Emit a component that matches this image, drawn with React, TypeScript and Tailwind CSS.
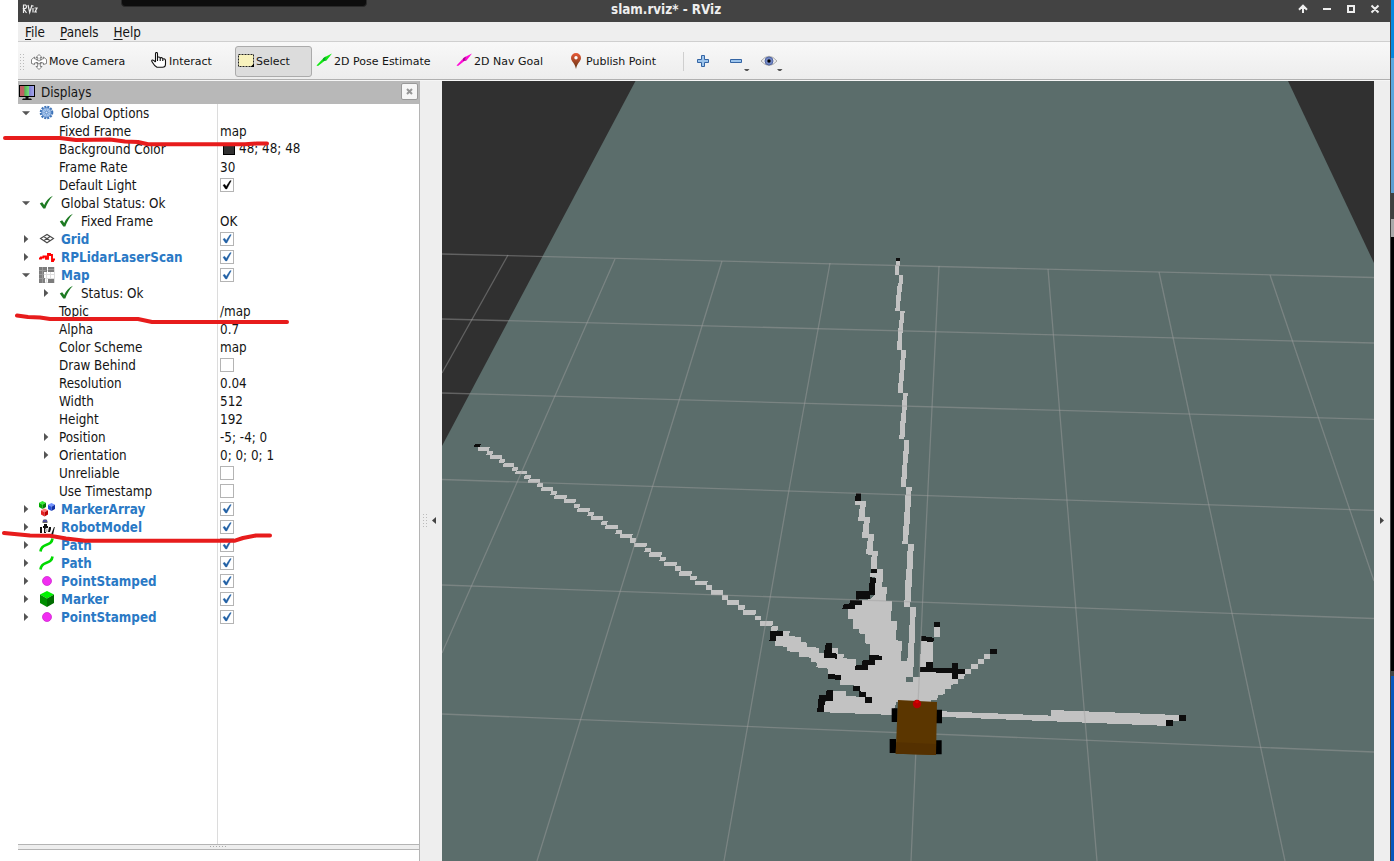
import React from "react";

type IconName =
  | "gear" | "ok" | "grid" | "laser" | "map" | "markers" | "robot" | "path" | "point" | "marker";

type RowData = {
  label: string;
  level?: 0 | 1;
  arrow?: "open" | "closed";
  icon?: IconName;
  bold?: boolean;
  value?: string;
  swatch?: boolean;
  check?: "black" | "blue" | "off";
};

const rows: RowData[] = [
  { label: "Global Options", arrow: "open", icon: "gear" },
  { label: "Fixed Frame", level: 1, value: "map" },
  { label: "Background Color", level: 1, value: "48; 48; 48", swatch: true },
  { label: "Frame Rate", level: 1, value: "30" },
  { label: "Default Light", level: 1, check: "black" },
  { label: "Global Status: Ok", arrow: "open", icon: "ok" },
  { label: "Fixed Frame", level: 1, icon: "ok", value: "OK" },
  { label: "Grid", arrow: "closed", icon: "grid", bold: true, check: "blue" },
  { label: "RPLidarLaserScan", arrow: "closed", icon: "laser", bold: true, check: "blue" },
  { label: "Map", arrow: "open", icon: "map", bold: true, check: "blue" },
  { label: "Status: Ok", level: 1, arrow: "closed", icon: "ok" },
  { label: "Topic", level: 1, value: "/map" },
  { label: "Alpha", level: 1, value: "0.7" },
  { label: "Color Scheme", level: 1, value: "map" },
  { label: "Draw Behind", level: 1, check: "off" },
  { label: "Resolution", level: 1, value: "0.04" },
  { label: "Width", level: 1, value: "512" },
  { label: "Height", level: 1, value: "192" },
  { label: "Position", level: 1, arrow: "closed", value: "-5; -4; 0" },
  { label: "Orientation", level: 1, arrow: "closed", value: "0; 0; 0; 1" },
  { label: "Unreliable", level: 1, check: "off" },
  { label: "Use Timestamp", level: 1, check: "off" },
  { label: "MarkerArray", arrow: "closed", icon: "markers", bold: true, check: "blue" },
  { label: "RobotModel", arrow: "closed", icon: "robot", bold: true, check: "blue" },
  { label: "Path", arrow: "closed", icon: "path", bold: true, check: "blue" },
  { label: "Path", arrow: "closed", icon: "path", bold: true, check: "blue" },
  { label: "PointStamped", arrow: "closed", icon: "point", bold: true, check: "blue" },
  { label: "Marker", arrow: "closed", icon: "marker", bold: true, check: "blue" },
  { label: "PointStamped", arrow: "closed", icon: "point", bold: true, check: "blue" },
];

function Cube({ x, y, s, top, left, right }: { x: number; y: number; s: number; top: string; left: string; right: string }) {
  return (
    <g transform={`translate(${x} ${y}) scale(${s})`}>
      <path d="M0 3.500 7 0l7 3.500-7 4z" fill={top} />
      <path d="M0 3.500 7 7.500V16L0 12z" fill={left} />
      <path d="M14 3.500 7 7.500V16l7-4z" fill={right} />
    </g>
  );
}

function TreeIcon({ name }: { name: IconName }) {
  const art: Record<IconName, React.ReactNode> = {
    gear: (
      <>
        <circle cx="7.5" cy="7.5" r="5.7" fill="none" stroke="#3f74b8" strokeWidth="2.2" strokeDasharray="2 1" />
        <circle cx="7.5" cy="7.5" r="4.8" fill="#a3c3ea" stroke="#4a7dc0" strokeWidth=".9" />
        <path d="M7.5 3v9M3 7.5h9M4.4 4.4l6.2 6.2M10.600 4.400l-6.200 6.200" stroke="#7ba3d9" strokeWidth=".6" />
        <circle cx="7.500" cy="7.500" r="1.300" fill="#dbe8f8" stroke="#4a7dc0" strokeWidth=".7" />
      </>
    ),
    ok: <path d="M.8 8.500 3.200 7.200l2 2.800C7 6 10 2.500 14 .8 10.500 4.500 8 8.700 6.300 13.500H4.300z" fill="#1d7a22" />,
    grid: (
      <g fill="none" stroke="#4a4a4a" strokeWidth="1.100">
        <path d="M1.500 7.500 8 3.500l6.500 4L8 11.800zM4.700 5.500l6.500 4.200M11.200 5.500 4.700 9.700" />
      </g>
    ),
    laser: <path d="M0 9.500h2V8.500h2.500V7.500H7v2.200h2V5h2v1h2v6h1v-1.500h2" fill="none" stroke="#f00" strokeWidth="1.900" />,
    map: (
      <g shapeRendering="crispEdges">
        <path d="M0 3.500h16M0 7.500h16M0 11.500h16M3.500 0v16M7.500 0v16M11.500 0v16M15.500 0v16M0 15.500h16" stroke="#dedede" fill="none" />
        <path fill="#7c7c7c" d="M0 0h8v5H5v6h1v5H0zM9 0h6v5H9zM9 12h6v4H9z" />
        <path d="M0 3.500h7M9 2.500h6M0 7.500h5M0 11.500h5M3.500 0v16" stroke="#999" fill="none" />
      </g>
    ),
    markers: (
      <>
        <Cube x={0} y={0} s={0.5} top="#30ee30" left="#00a800" right="#007d00" />
        <Cube x={9} y={2} s={0.5} top="#7293ff" left="#2450dc" right="#1231a6" />
        <Cube x={2} y={7.5} s={0.5} top="#ff7777" left="#e42222" right="#b00" />
      </>
    ),
    robot: (
      <g>
        <path d="M3.500 2.500a2.500 2.200 0 0 1 5 0V4h-5z" fill="#666" />
        <path d="M4 2h4" stroke="#3434d0" />
        <path d="M5 5h3v2H5zM1 8h2v6H1zM4 7h5v2H7v5H5V9H4zM10 8h2v2l-1 3H9zM3 15h8v1H3zM13 13l2-5h.8L14 16h-2z" fill="#111" />
        <path d="M6 9.500h2.500V13H6z" fill="#bbb" />
      </g>
    ),
    path: <path d="M1.500 14.500c.5-4 2.500-5.500 5.500-6.500s6-2 6.500-6.500" fill="none" stroke="#00d900" strokeWidth="2.600" />,
    point: <circle cx="8" cy="8" r="4.500" fill="#f12df1" stroke="#cf28cf" strokeWidth=".8" />,
    marker: <Cube x={1} y={0} s={1} top="#00f400" left="#008e00" right="#006d00" />,
  };
  return <svg className="h-4 w-4 shrink-0" viewBox="0 0 16 16">{art[name]}</svg>;
}

function Arrow({ kind }: { kind?: "open" | "closed" }) {
  return (
    <svg className="mb-[3px] h-[10px] w-4 shrink-0" viewBox="0 0 16 10">
      {kind === "open" && <path d="M4 3.200h8L8 7.300z" fill="#555" />}
      {kind === "closed" && <path d="M6 1v8l4.300-4z" fill="#555" />}
    </svg>
  );
}

function CheckBox({ kind }: { kind: "black" | "blue" | "off" }) {
  return (
    <span className="flex h-[14px] w-[14px] items-center justify-center border border-[#b4b4b4] bg-white">
      {kind !== "off" && (
        <svg className="h-3 w-3" viewBox="0 0 12 12">
          <path d="M2 6.200l1.700-.9 1.500 2.200L9 1.700h1.200L5.800 10H4.600z" fill={kind === "blue" ? "#2160a5" : "#000"} stroke={kind === "blue" ? "#2160a5" : "#000"} strokeWidth=".4" />
        </svg>
      )}
    </span>
  );
}

function TreeRow({ row }: { row: RowData }) {
  return (
    <div className="flex h-[18px] shrink-0">
      <div className={`flex w-[199px] shrink-0 items-center ${row.level === 1 ? "pl-5" : ""}`}>
        <Arrow kind={row.arrow} />
        {row.icon ? (
          <span className="ml-[5px] mr-[6px] flex h-[18px] pb-[2px]"><TreeIcon name={row.icon} /></span>
        ) : (
          <span className="w-[5px]" />
        )}
        <span className={`whitespace-nowrap leading-[18px] ${row.bold ? "font-bold text-[#2a79c5]" : ""}`}>{row.label}</span>
      </div>
      <div className="flex flex-1 items-start border-l border-[#dcdcdc] pl-[2px]">
        {row.swatch && <span className="ml-[3px] mr-1 mt-[2px] h-3 w-3 border border-black bg-[#303030]" />}
        {row.value && <span className={row.swatch ? "leading-[16px]" : "leading-[18px]"}>{row.value}</span>}
        {row.check && <span className="mt-px"><CheckBox kind={row.check} /></span>}
      </div>
    </div>
  );
}

/* Scan trail cells: x1, y1, x2, y2 in thirds of a pixel, origin at (460, 430). */
const trail: number[][] = [
  [54,52,88,62],[80,64,98,74],[90,76,126,86],[118,88,134,98],[130,100,162,109],[157,112,173,122],[166,123,201,132],
  [193,135,212,145],[205,147,240,157],[232,159,249,170],[244,171,279,182],[272,183,290,194],[283,195,320,206],
  [312,207,347,218],[342,222,359,233],[352,234,389,245],[383,246,401,257],[393,259,429,270],[424,273,442,284],
  [436,286,474,297],[467,300,486,311],[480,313,517,324],[510,325,527,338],[522,339,560,350],[554,354,573,365],
  [568,367,605,379],[599,381,617,392],[612,396,650,408],[645,409,663,422],[658,423,695,436],[690,438,710,450],
  [705,453,742,465],[738,466,756,480],[753,481,789,495],[786,496,804,510],[801,511,837,525],[834,525,854,539],
  [849,541,887,554],[885,557,903,570],[900,573,938,587],[934,588,953,602],
];

const northRay = [
  "168,63 180,63 180,77 177,77 177,105 165,105 165,76 168,76",
  "177,105 189,105 189,131 186,131 186,156 183,156 183,184 180,184 180,213 166,213 168,181 171,150 174,128 177,128",
  "180,213 195,213 195,219 192,219 192,249 189,249 189,279 186,279 185,330 171,330 171,304 174,304 174,264 177,264 177,240 180,240",
  "183,330 198,330 198,354 195,354 195,391 192,391 192,423 189,423 189,459 174,459 174,430 177,430 177,399 180,399 180,361 183,361",
  "189,459 204,459 204,468 201,468 201,510 198,510 198,549 195,549 195,591 192,591 192,597 177,597 177,584 180,584 180,543 183,543 183,520 186,520 186,480 189,480",
  "192,600 207,600 207,642 204,642 204,669 201,669 201,716 198,716 198,741 183,741 183,711 186,711 186,675 189,675 189,633 192,633",
  "198,741 216,741 216,753 213,753 213,800 210,800 210,852 207,852 207,885 204,885 204,912 186,912 186,904 189,904 189,859 192,859 192,816 195,816 195,765 198,765",
  "204,912 222,912 222,934 219,934 219,988 216,988 216,1040 213,1040 213,1085 210,1085 210,1101 192,1101 192,1080 195,1080 195,1020 198,1020 198,988 201,988 201,934 204,934",
  "45,783 78,783 78,801 75,801 74,831 90,831 90,843 87,858 86,882 102,882 102,897 99,912 98,933 114,933 111,962 111,987 93,987 93,960 96,945 78,943 81,915 84,893 66,893 69,862 72,843 54,842 57,820 60,795 45,795",
];

const freeArea = [
  "108,228 128,228 128,213 150,213 147,228 183,231 183,246 201,248 201,261 236,263 236,278 253,279 275,279 273,264 294,265 294,281 312,283 310,295 347,297 347,315 368,315 388,298 390,252 374,250 374,222 356,220 356,207 340,206 340,178 324,176 324,148 345,147 345,135 365,120 390,118 404,105 404,52 391,52 391,38 410,38 410,27 429,27 427,82 441,82 438,124 456,124 453,183 471,183 468,241 486,243 483,303 502,303 505,260 508,205 511,141 528,141 525,207 522,294 519,351 540,351 540,337 656,338 656,342 675,342 672,357 654,357 653,372 633,374 633,388 615,388 614,403 594,405 592,419 575,420 573,426 470,426 455,465 423,465 421,462 345,462 345,459 270,458 270,456 251,456 251,430 278,408 278,392 318,394 318,408 375,411 377,399 358,393 340,376 301,374 301,360 283,358 265,342 265,326 229,322 231,308 214,306 214,293 178,290 178,276 141,274 141,261 105,257 106,243",
  "543,244 579,244 579,323 540,323",
  "582,201 600,201 600,231 582,231",
  "675,327 693,327 693,342 675,342",
  "693,312 714,312 714,327 693,327",
  "714,297 732,297 732,312 714,312",
  "732,282 750,282 750,297 732,297",
  "398,0 411,0 411,27 393,27 396,10",
];

const occupied = [
  "393,27 411,27 411,39 393,39",
  "391,52 408,54 408,70 405,70 405,105 389,105 389,117 347,119 349,94 387,94 387,72 390,68",
  "330,121 366,121 365,135 345,135 344,147 306,147 312,132 328,132",
  "90,213 129,213 128,228 108,228 107,243 88,243 90,228",
  "258,249 275,249 275,279 291,281 291,296 252,293 254,264",
  "264,342 302,345 302,360 264,357",
  "388,285 426,287 425,300 405,300 404,315 384,315 384,329 345,329 347,315 366,315 368,300 387,300",
  "340,378 359,378 359,394 377,397 377,411 396,411 396,429 375,428 375,411 358,411 358,393 339,392",
  "260,390 279,390 278,422 255,422 251,456 231,456 237,405 257,405",
  "543,228 558,228 558,231 582,233 580,246 555,244 543,243",
  "582,186 600,186 600,201 582,201",
  "540,321 558,321 558,306 579,306 579,323 636,325 636,309 654,309 654,326 675,328 675,342 654,342 654,357 636,357 636,339 540,336",
  "750,267 771,267 771,282 750,282",
];

const gridLines = [
  "442,254 1374,277.500", "442,319 1374,343", "442,393 1374,419.300", "442,479.500 1374,510.300",
  "442,585 1374,618.500", "442,714 1374,752",
  "508,255 442,373", "615,259 540,430 442,653", "722,261 670,430 537,861", "830,263 789,490 724,861",
  "939,266 924,570 911,861", "1048,269 1082.500,690 1097,861", "1159,272 1285,861", "1270,275 1374,581",
];

function Scene() {
  return (
    <svg className="block h-[780px] w-[932px] shrink-0" viewBox="442 81 932 780">
      <rect x="442" y="81" width="932" height="780" fill="#303030" />
      <polygon points="635.500,81 1288,81 1374,263 1374,861 442,861 442,446" fill="#5b6d6b" />
      <g shapeRendering="crispEdges">
        <g transform="translate(460 430) scale(.33333)">
          {trail.map(([x1, y1, x2, y2]) => (
            <polygon
              key={x1}
              fill="#c2c2c2"
              points={`${x1 + 1},${y1} ${x2 + 1},${y1} ${x2 - 1},${y2 + 1} ${x1 - 1},${y2 + 1}`}
            />
          ))}
          <polygon points="45,42 63,42 60,51 42,51" fill="#0d0d0d" />
        </g>
        <g transform="translate(840 240) scale(.33333)">
          {northRay.map((p) => <polygon key={p} points={p} fill="#c2c2c2" />)}
          <polygon points="168,54 180,54 180,63 168,63" fill="#0d0d0d" />
          <polygon points="48,759 63,759 63,783 45,783 45,768 48,768" fill="#0d0d0d" />
        </g>
        <g transform="translate(740 560) scale(.33333)">
          {freeArea.map((p) => <polygon key={p} points={p} fill="#c2c2c2" />)}
          <rect x="498" y="351" width="21" height="15" fill="#5b6d6b" />
          {occupied.map((p) => <polygon key={p} points={p} fill="#0d0d0d" />)}
        </g>
        <g transform="translate(930 690) scale(.33333)">
          <polygon
            fill="#c2c2c2"
            points="36,63 51,63 51,66 126,66 126,69 204,69 204,72 279,72 279,75 354,75 354,78 363,78 363,60 402,60 402,63 477,63 477,66 555,66 555,69 630,69 630,72 705,72 705,75 748,75 748,93 730,93 710,108 681,108 681,105 606,105 606,102 531,102 531,99 456,99 456,96 381,96 381,93 306,93 306,90 228,90 228,87 153,87 153,84 78,84 78,81 36,81"
          />
          <path d="M747 75h21v18h-21zM708 90h21v18h-21z" fill="#0d0d0d" />
        </g>
      </g>
      <g fill="none" stroke="#a0a0a0" strokeOpacity=".45" strokeWidth="1.300">
        {gridLines.map((p) => <polyline key={p} points={p} />)}
      </g>
      <g transform="translate(740 560) scale(.33333)">
        <path d="M455 445h18v41h-18zM588 449h18v41h-18zM449 537h19v42h-19zM586 541h19v42h-19z" fill="#000" />
        <polygon points="474,420 591,426 588,585 467,581" fill="#5b3600" />
        <polygon points="469,547 588,552 588,585 467,581" fill="#543000" />
        <circle cx="531" cy="432" r="12.500" fill="#b80000" />
        <circle cx="531" cy="425" r="5" fill="#db0000" />
      </g>
    </svg>
  );
}

function ToolLabel({ children }: { children: React.ReactNode }) {
  return (
    <span className="mt-px whitespace-nowrap font-['DejaVu_Sans',sans-serif] text-[11px] leading-4 [font-stretch:normal]">
      {children}
    </span>
  );
}

function Toolbar() {
  return (
    <div className="flex h-[39px] shrink-0 items-center border-b border-t border-b-[#b0b0b0] border-t-[#cfcfcf] bg-linear-to-b from-[#f8f8f8] to-[#ededed] pt-[2px]">
      <svg className="h-4 w-[13px] shrink-0" viewBox="0 0 13 16">
        <path d="M2.500 0v16M5.500 0v16" stroke="#bbb" strokeDasharray="1 2" />
      </svg>
      <div className="flex w-[120px] items-center">
        <svg className="mr-0.5 h-4 w-4 shrink-0" viewBox="0 0 16 16" fill="#fff" stroke="#666" strokeWidth=".8">
          <path d="M8 .5 11 3.500H9.200V5.500l3.300-.8V3l3 2.500v4l-3 1V9L9.300 8.500v4H11L8 15.500l-3-3h1.700v-4L3.500 9v1.500l-3-1v-4L3.500 3v1.700l3.300.8v-2H5z" />
          <path d="M5 5.500q3 3 6 0M5 8.500q3 3 6 0" fill="none" />
        </svg>
        <ToolLabel>Move Camera</ToolLabel>
      </div>
      <div className="flex w-[84px] items-center">
        <svg className="mb-[3px] mr-px h-4 w-[17px] shrink-0" viewBox="0 0 17 16" fill="#fff" stroke="#111" strokeWidth="1.100">
          <path d="M4.500 10V1.800q0-1.300 1-1.300T6.500 1.800V6q.3-1.300 1.500-1 1.200 0 1.200 1.300.8-1 1.800-.6.9.3.8 1.500.8-.8 1.800-.3.900.5.900 1.600V12q0 3.300-3 3.300H6Q3.500 14 1.500 10.500 0 8.500 1.300 8q1-.3 3.200 2M6.500 6v3M9.200 6.300V9M11.800 7v2" />
        </svg>
        <ToolLabel>Interact</ToolLabel>
      </div>
      <div className="mb-px flex h-[31px] w-[77px] items-center rounded-[3px] border border-[#ababab] bg-[#dcdcdc] pl-[2px] pt-px">
        <svg className="mb-[3px] mr-0.5 h-[13px] w-4 shrink-0" viewBox="0 0 16 13">
          <rect x=".5" y=".5" width="15" height="12" fill="#f8f2bd" stroke="#222" strokeDasharray="2 1" />
          <path d="M16 9.500V13h-3.500z" fill="#000" />
        </svg>
        <ToolLabel>Select</ToolLabel>
      </div>
      <div className="ml-1 flex w-[140px] items-center">
        <svg className="mb-[3px] mr-[2px] h-[14px] w-4 shrink-0" viewBox="0 0 16 14">
          <path d="m.5 12.500 7.500-8L16 .5l-5.500 7L9 7.500 2 13z" fill="#12e812" />
          <path d="m7 5.500 3-2-1 3 1.500 1-3.500.500z" fill="#08a52b" />
        </svg>
        <ToolLabel>2D Pose Estimate</ToolLabel>
      </div>
      <div className="flex w-[114px] items-center">
        <svg className="mb-[3px] mr-[2px] h-[14px] w-4 shrink-0" viewBox="0 0 16 14">
          <path d="m.5 12.500 7.500-8L16 .5l-5.500 7L9 7.500 2 13z" fill="#ff0bd6" />
          <path d="m7 5.500 3-2-1 3 1.500 1-3.500.500z" fill="#a90b91" />
        </svg>
        <ToolLabel>2D Nav Goal</ToolLabel>
      </div>
      <div className="flex w-[113px] items-center">
        <svg className="mb-[2px] ml-px mr-[5px] h-4 w-[10px] shrink-0" viewBox="0 0 10 16">
          <defs>
            <linearGradient id="pin" x2="0" y2="1"><stop stopColor="#e95a38" /><stop offset="1" stopColor="#5f3312" /></linearGradient>
          </defs>
          <path d="M5 0a5 5 0 0 0-5 5c0 3.500 4 5 5 11 1-6 5-7.500 5-11a5 5 0 0 0-5-5z" fill="url(#pin)" />
          <circle cx="5" cy="4.800" r="1.700" fill="#fff" />
        </svg>
        <ToolLabel>Publish Point</ToolLabel>
      </div>
      <div className="mr-[13px] h-[19px] w-px bg-[#cfcfcf]" />
      <svg className="h-[18px] w-[90px]" viewBox="0 0 90 18">
        <g fill="#9cc4ec" stroke="#3465a4">
          <path d="M4.500 2.500h3v4h4v3h-4v4h-3v-4h-4v-3h4z" />
          <path d="M33.500 6.500h11v3h-11z" />
        </g>
        <path d="M47 16h5.500l-2.700 3zM80 16h5.500l-2.700 3z" fill="#555" />
        <path d="M64 8q8-9.500 16 0-8 9-16 0z" fill="#eee" stroke="#aaa" />
        <circle cx="72" cy="8" r="4" fill="#7589c5" stroke="#5267a4" />
        <circle cx="72" cy="8" r="1.700" fill="#000" />
      </svg>
    </div>
  );
}

export default function App() {
  return (
    <div className="relative flex h-[861px] w-[1394px] overflow-hidden bg-white pl-[18px] font-['DejaVu_Sans_Condensed','DejaVu_Sans',sans-serif] text-[13.333px] text-[#141414] [font-stretch:condensed]">
      <div className="flex w-[1372px] flex-col bg-[#eee]">
        <header className="flex h-[22px] shrink-0 items-start bg-[#434343] text-[#eee]">
          <svg className="ml-1 mt-[3px] h-3 w-4" viewBox="0 0 16 12">
            <path d="M1.500 10V2h2q2 1.500 0 3.500h-2L4.500 10M6 2l1.700 7.500L10 2M11 5v4.500M12.500 5H15l-2 4h2M11 2.500v1" fill="none" stroke="#eee" strokeWidth="1.200" />
          </svg>
          <h1 className="ml-[573px] w-[685px] font-bold leading-[19px]">slam.rviz* - RViz</h1>
          <svg className="mt-1 h-[10px] w-[84px]" viewBox="0 0 84 10" fill="none" stroke="#eee" strokeWidth="2">
            <path d="M7 9V2M3 5.700 7 1.700l4 4M27 5h8M52 2h6v6h-6zM75.500 1.500l7 7M82.500 1.500l-7 7" />
          </svg>
        </header>
        <nav className="flex h-[19px] shrink-0 items-center gap-[15px] pl-[7px] pt-px leading-[19px]">
          <span><u className="underline-offset-2">F</u>ile</span>
          <span><u className="underline-offset-2">P</u>anels</span>
          <span><u className="underline-offset-2">H</u>elp</span>
        </nav>
        <Toolbar />
        <div className="h-px shrink-0 bg-[#f6f6f6]" />
        <main className="flex h-[780px]">
          <aside className="flex w-[402px] shrink-0 flex-col border-r border-[#b4b4b4]">
            <div className="flex h-[23px] shrink-0 items-center bg-[#b8b8b8] pl-px">
              <svg className="h-4 w-4" viewBox="0 0 16 16">
                <defs>
                  <linearGradient id="screen">
                    <stop offset=".3" stopColor="#bf5f62" /><stop offset=".35" stopColor="#51b652" />
                    <stop offset=".63" stopColor="#79d77c" /><stop offset=".67" stopColor="#8182d6" /><stop offset="1" stopColor="#aaabed" />
                  </linearGradient>
                </defs>
                <rect x=".5" y=".5" width="15" height="11" fill="url(#screen)" stroke="#000" />
                <path d="M6.500 12h3v1.500H12l1 1.500H3l1-1.500h2.500z" fill="#111" />
              </svg>
              <span className="ml-[6px] flex-1 leading-[22px]">Displays</span>
              <span className="mb-[3px] mr-px flex h-[17px] w-[17px] items-center justify-center rounded-[2px] border border-[#999] bg-[#f6f6f6]">
                <svg className="h-[7px] w-[7px]" viewBox="0 0 7 7"><path d="m1 1 5 5M6 1 1 6" stroke="#969696" strokeWidth="2" /></svg>
              </span>
            </div>
            <section className="flex h-[741px] shrink-0 flex-col border-b border-[#b4b4b4] bg-white">
              <div className="ml-[199px] h-px shrink-0 border-l border-[#dcdcdc]" />
              {rows.map((row, i) => <TreeRow key={i} row={row} />)}
              <div className="ml-[199px] flex-1 border-l border-[#dcdcdc]" />
            </section>
            <div className="flex h-1 shrink-0 justify-center">
              <svg className="h-1 w-[17px]" viewBox="0 0 17 4"><path d="M0 1.500h17" stroke="#aaa" strokeDasharray="1 2" /></svg>
            </div>
            <div className="flex-1 border-t border-[#b4b4b4] bg-white" />
          </aside>
          <div className="flex w-[22px] shrink-0 flex-col items-center bg-[#eee] pt-[433px]">
            <svg className="h-[14px] w-4" viewBox="0 0 16 14">
              <path d="M.5 0v14M3.500 0v14" stroke="#bbb" strokeDasharray="1 2" />
              <path d="M13 3v7L9 6.500z" fill="#444" />
            </svg>
          </div>
          <Scene />
          <div className="w-4 bg-[#eee] pl-[6px] pt-[436px]">
            <svg className="h-[7px] w-[4px]" viewBox="0 0 4 7"><path d="M0 0v7l4-3.500z" fill="#444" /></svg>
          </div>
        </main>
      </div>
      <div className="w-px bg-[#444]" />
      <div className="flex w-[3px] flex-col bg-black">
        <div className="h-[58px] bg-[#0787df]" />
        <div className="h-[135px] bg-linear-to-b from-[#5ba9e2] to-[#5e9ed2]" />
        <div className="h-[26px] bg-[#3f3f3f]" />
        <div className="h-[18px] bg-[#a9a9a9]" />
        <div className="h-[434px]" />
        <div className="h-[5px] bg-[#444]" />
        <div className="flex-1 bg-[#0756bd]" />
      </div>
      <div className="absolute left-[121px] top-[-6px] h-[13px] w-[246px] rounded-[4px] border border-[#2a2a2a] bg-[#0d0d0d]" />
      <svg className="pointer-events-none absolute left-0 top-0 h-[861px] w-[1394px]" viewBox="0 0 1394 861" fill="none" stroke="#e71c1c" strokeWidth="4" strokeLinecap="round" strokeLinejoin="round">
        <path d="M5 138H60L76 140 110 139.500 125 141.500 138 142 148 144.300H245L257 143.500H267" />
        <path d="M17 315.500 28 317 40 317.500 50 319H138L152 322H287" />
        <path d="M4 533 30 535.500 50 535.800 66 538.500 85 540.700H235L243 538 256 535.500H270" />
      </svg>
    </div>
  );
}
